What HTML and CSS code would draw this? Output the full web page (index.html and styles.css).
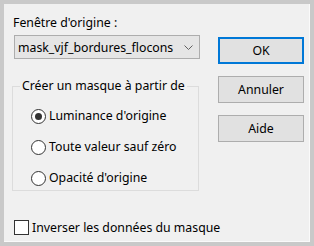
FILE: index.html
```html
<!DOCTYPE html>
<html lang="fr">
<head>
  <meta charset="UTF-8">
  <title>Nouveau masque</title>
  <link rel="stylesheet" href="styles.css">
</head>
<body>
  <div class="dialog">
    <div class="main">
      <div class="left">
        <div class="field-label">Fenêtre d'origine :</div>
        <div class="combo">
          <span>mask_vjf_bordures_flocons</span>
          <svg class="chevron" width="9" height="5" viewBox="0 0 9 5"><path d="M0.5 0.5 L4.5 4.5 L8.5 0.5" fill="none" stroke="#606060" stroke-width="1"/></svg>
        </div>
        <fieldset class="group">
          <legend>Créer un masque à partir de</legend>
          <label class="radio"><span class="circle checked"></span>Luminance d'origine</label>
          <label class="radio"><span class="circle"></span>Toute valeur sauf zéro</label>
          <label class="radio"><span class="circle"></span>Opacité d'origine</label>
        </fieldset>
      </div>
      <div class="buttons">
        <button class="btn btn-default">OK</button>
        <button class="btn">Annuler</button>
        <button class="btn">Aide</button>
      </div>
    </div>
    <label class="check"><span class="box"></span>Inverser les données du masque</label>
  </div>
</body>
</html>
```

FILE: styles.css
```css
body {
  margin: 0;
  background-color: #c9c9c9;
  font-family: 'Noto Sans', sans-serif;
  font-size: 12.3px;
  color: #000;
}

.dialog {
  margin: 4px;
  width: 305px;
  height: 237px;
  background-color: #f0f0f0;
  border-right: 1px solid #fafafa;
  border-bottom: 1px solid #fafafa;
  position: relative;
}

.main {
  display: flex;
}

.left {
  flex: none;
  width: 196px;
  padding-left: 8px;
}

.field-label {
  padding-top: 11px;
  line-height: 16px;
  padding-left: 1px;
}

.combo {
  margin-top: 4px;
  margin-left: 2px;
  height: 22px;
  border: 1px solid #adadad;
  background-color: #e5e5e5;
  display: flex;
  align-items: center;
  justify-content: space-between;
  padding-left: 3px;
  box-sizing: content-box;
  width: 181px;
}

.chevron {
  margin-right: 6px;
}

.group {
  margin: 19px 0 0 0;
  width: 187px;
  height: 113px;
  padding: 14px 0 0 0;
  border: 1px solid #dcdcdc;
  box-sizing: border-box;
}

.group legend {
  margin-left: 7px;
  padding: 0 2px;
  line-height: 16px;
  white-space: nowrap;
}

.radio {
  display: flex;
  align-items: center;
  height: 16px;
  line-height: 16px;
  margin-left: 18px;
  margin-bottom: 15px;
}

.circle {
  width: 13px;
  height: 13px;
  border: 1px solid #333;
  border-radius: 50%;
  background: #fff;
  margin-right: 3px;
  position: relative;
}

.circle.checked::after {
  content: "";
  position: absolute;
  left: 3px;
  top: 3px;
  width: 7px;
  height: 7px;
  border-radius: 50%;
  background: #333;
}

.buttons {
  display: flex;
  flex-direction: column;
  padding-top: 33px;
  padding-left: 10px;
}

.btn {
  width: 86px;
  height: 27px;
  margin-bottom: 12px;
  background-color: #e1e1e1;
  border: 1px solid #adadad;
  font-family: 'Noto Sans', sans-serif;
  font-size: 12.3px;
  color: #000;
  padding: 0;
}

.btn-default {
  border: 2px solid #0078d7;
}

.check {
  position: absolute;
  left: 10px;
  top: 215px;
  display: flex;
  align-items: center;
}

.box {
  width: 13px;
  height: 13px;
  border: 1px solid #333;
  background: #fff;
  margin-right: 3px;
}
```
